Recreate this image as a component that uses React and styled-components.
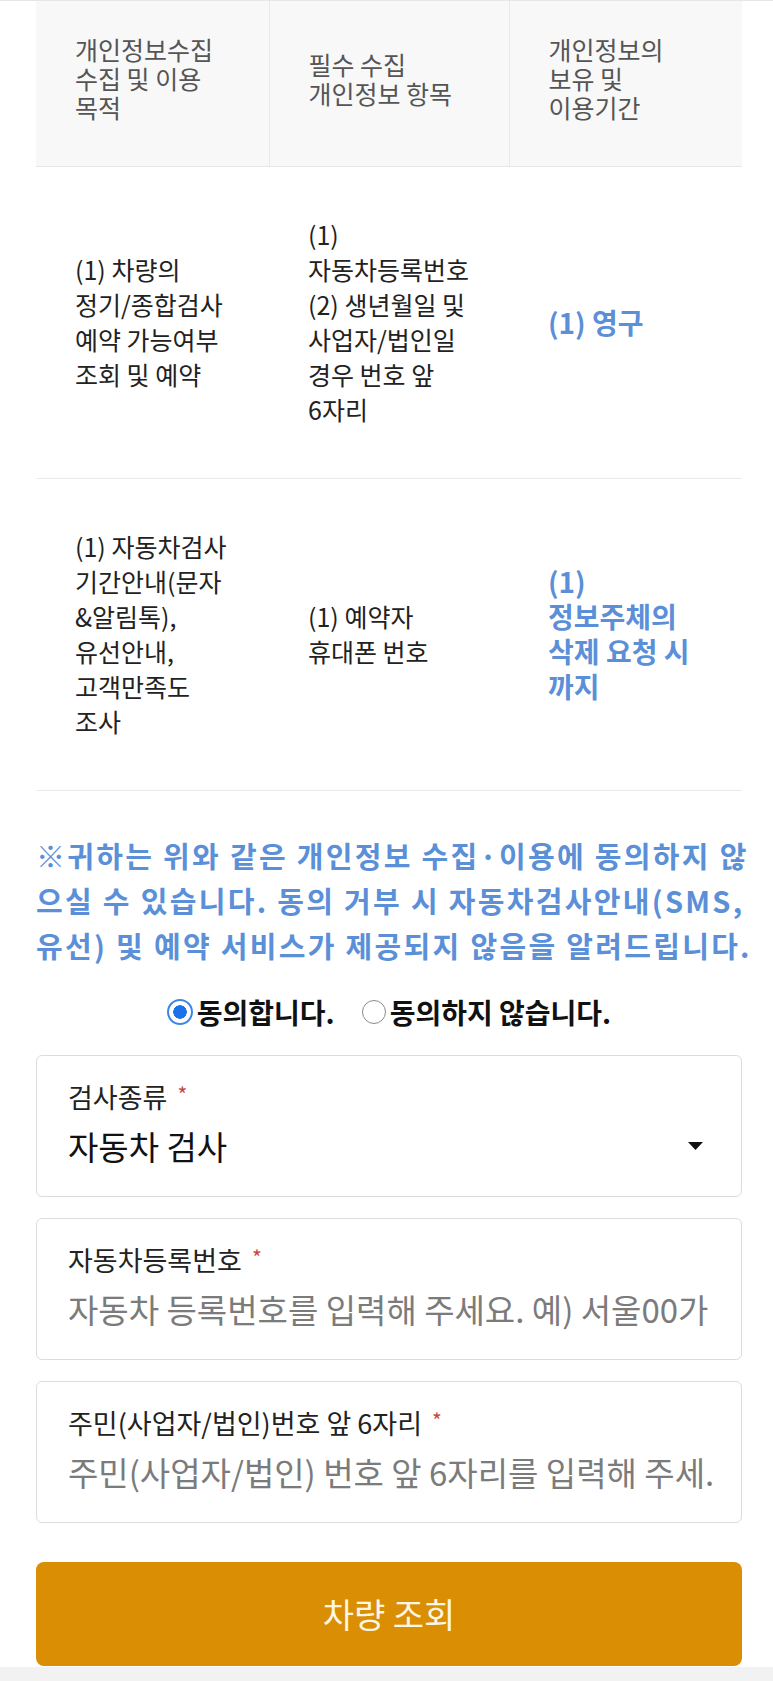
import React from 'react';
import styled, { createGlobalStyle } from 'styled-components';

const rows = [
	{
		purpose: ['(1) 차량의', '정기/종합검사', '예약 가능여부', '조회 및 예약'],
		items: ['(1)', '자동차등록번호', '(2) 생년월일 및', '사업자/법인일', '경우 번호 앞', '6자리'],
		period: ['(1) 영구'],
	},
	{
		purpose: ['(1) 자동차검사', '기간안내(문자', '&알림톡),', '유선안내,', '고객만족도', '조사'],
		items: ['(1) 예약자', '휴대폰 번호'],
		period: ['(1)', '정보주체의', '삭제 요청 시', '까지'],
	},
];

const headers = [
	['개인정보수집', '수집 및 이용', '목적'],
	['필수 수집', '개인정보 항목'],
	['개인정보의', '보유 및', '이용기간'],
];

const notice = [
	'※귀하는 위와 같은 개인정보 수집·이용에 동의하지 않',
	'으실 수 있습니다. 동의 거부 시 자동차검사안내(SMS,',
	'유선) 및 예약 서비스가 제공되지 않음을 알려드립니다.',
];

// lines are broken where the original page breaks them
const Lines = ({ lines }) =>
	lines.map((line, i) => (
		<React.Fragment key={i}>
			{i > 0 && <br />}
			{line}
		</React.Fragment>
	));

const App = () => {
	return (
		<Page>
			<GlobalStyle />
			<Content>
				<PolicyTable>
					<colgroup>
						<col style={{ width: 233 }} />
						<col style={{ width: 240 }} />
						<col style={{ width: 233 }} />
					</colgroup>
					<thead>
						<tr>
							{headers.map((h, i) => (
								<HeadCell key={i}>
									<Lines lines={h} />
								</HeadCell>
							))}
						</tr>
					</thead>
					<tbody>
						{rows.map((row, i) => (
							<tr key={i}>
								<BodyCell>
									<Lines lines={row.purpose} />
								</BodyCell>
								<BodyCell>
									<Lines lines={row.items} />
								</BodyCell>
								<BodyCell $accent>
									<Lines lines={row.period} />
								</BodyCell>
							</tr>
						))}
					</tbody>
				</PolicyTable>

				<Notice>
					{notice.map((line, i) => (
						<NoticeLine key={i}>{line}</NoticeLine>
					))}
				</Notice>

				<ConsentRow>
					<Choice>
						<Radio name="agree" defaultChecked />
						동의합니다.
					</Choice>
					<Choice>
						<Radio name="agree" />
						동의하지 않습니다.
					</Choice>
				</ConsentRow>

				<Form>
					<Field>
						<Label>
							검사종류 <Req>*</Req>
						</Label>
						<SelectRow>
							<span>자동차 검사</span>
							<svg width="15" height="8" viewBox="0 0 15 8">
								<path d="M0 0h15L7.5 8z" fill="#111" />
							</svg>
						</SelectRow>
					</Field>
					<Field>
						<Label>
							자동차등록번호 <Req>*</Req>
						</Label>
						<Input placeholder="자동차 등록번호를 입력해 주세요. 예) 서울00가" />
					</Field>
					<Field>
						<Label>
							주민(사업자/법인)번호 앞 6자리 <Req>*</Req>
						</Label>
						<Input placeholder="주민(사업자/법인) 번호 앞 6자리를 입력해 주세." />
					</Field>
				</Form>

				<SubmitButton>차량 조회</SubmitButton>
			</Content>
			<BottomBar />
		</Page>
	);
};

export default App;

const GlobalStyle = createGlobalStyle`
	* {
		box-sizing: border-box;
	}
	body {
		margin: 0;
		background: #fff;
		font-family: "Noto Sans CJK KR", "Noto Sans", sans-serif;
	}
`;
const Page = styled.div`
	border-top: 1px solid #e6e6e6;
`;
const Content = styled.div`
	padding: 0 31px 0 36px;
`;
const PolicyTable = styled.table`
	width: 100%;
	border-collapse: collapse;
	table-layout: fixed;
`;
const HeadCell = styled.th`
	height: 165px;
	padding: 0 8px 9px 39px;
	background: #f8f8f8;
	border-right: 1px solid #e8e8e8;
	border-bottom: 1px solid #e6e6e6;
	text-align: left;
	vertical-align: middle;
	white-space: nowrap;
	font-size: 25px;
	font-weight: 400;
	line-height: 29px;
	color: #555;
	&:last-child {
		border-right: none;
	}
`;
const BodyCell = styled.td`
	height: 312px;
	padding: 0 6px 0 39px;
	border-bottom: 1px solid #ebebeb;
	vertical-align: middle;
	white-space: nowrap;
	line-height: 35px;
	font-size: ${p => (p.$accent ? '28px' : '25px')};
	font-weight: ${p => (p.$accent ? 700 : 400)};
	color: ${p => (p.$accent ? '#5b8fd8' : '#222')};
`;
const Notice = styled.div`
	margin-top: 42px;
	font-size: 29px;
	font-weight: 700;
	line-height: 45px;
	letter-spacing: 2.3px;
	color: #5b8fd8;
`;
const NoticeLine = styled.div`
	white-space: nowrap;
`;
const ConsentRow = styled.div`
	display: flex;
	justify-content: center;
	align-items: center;
	height: 30px;
	margin-top: 29px;
`;
const Choice = styled.label`
	display: flex;
	align-items: center;
	gap: 4px;
	font-size: 28px;
	font-weight: 700;
	color: #111;
	& + & {
		margin-left: 27px;
	}
`;
const Radio = styled.input.attrs({ type: 'radio' })`
	appearance: none;
	margin: 0;
	width: 24px;
	height: 24px;
	border-radius: 50%;
	border: 1.5px solid #8a8a8a;
	background: #fff;
	&:checked {
		width: 26px;
		height: 26px;
		border: 2.5px solid #3d86e8;
		background: radial-gradient(circle, #1a73e8 0 6.5px, #fff 7px);
	}
`;
const Form = styled.div`
	display: flex;
	flex-direction: column;
	gap: 21px;
	margin-top: 28px;
`;
const Field = styled.div`
	height: 142px;
	padding: 24px 20px 0 31px;
	border: 1px solid #dcdcdc;
	border-radius: 6px;
	background: #fff;
`;
const Label = styled.div`
	font-size: 27px;
	line-height: 34px;
	color: #222;
`;
const Req = styled.span`
	display: inline-block;
	vertical-align: top;
	margin: 4px 0 0 4px;
	font-size: 21px;
	line-height: 1;
	color: #c8483f;
`;
const SelectRow = styled.div`
	display: flex;
	justify-content: space-between;
	align-items: center;
	height: 42px;
	margin-top: 11px;
	padding-right: 18px;
	font-size: 33px;
	color: #111;
`;
const Input = styled.input`
	display: block;
	width: 100%;
	height: 42px;
	margin-top: 11px;
	padding: 0;
	border: 0;
	outline: none;
	background: transparent;
	font-family: inherit;
	font-size: 33px;
	color: #111;
	&::placeholder {
		color: #7b7b7b;
		opacity: 1;
	}
`;
const SubmitButton = styled.button`
	display: block;
	width: 100%;
	height: 104px;
	margin-top: 39px;
	border: 0;
	border-radius: 8px;
	background: #d98e03;
	color: #fff6e3;
	font-family: inherit;
	font-size: 34px;
	cursor: pointer;
`;
const BottomBar = styled.div`
	height: 20px;
	margin-top: 1px;
	background: #f2f2f2;
`;
